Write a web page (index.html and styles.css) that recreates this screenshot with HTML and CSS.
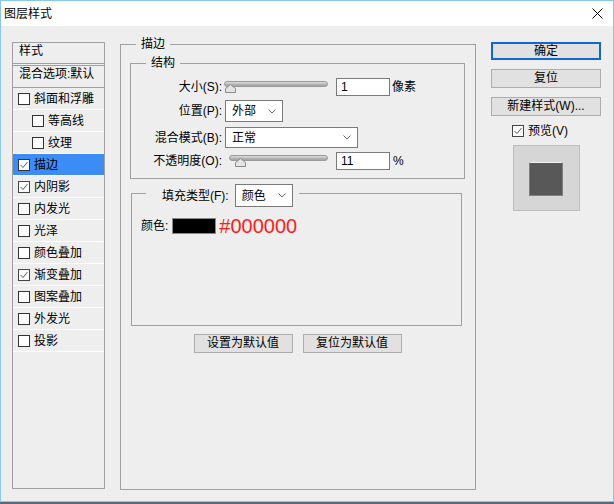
FILE: index.html
```html
<!DOCTYPE html>
<html lang="zh-CN">
<head>
<meta charset="utf-8">
<title>图层样式</title>
<link rel="stylesheet" href="styles.css">
</head>
<body>
<div class="window">
  <div class="titlebar">
    <span class="title">图层样式</span>
    <svg class="close" width="11" height="11" viewBox="0 0 11 11"><path d="M0.5 0.5L10.5 10.5M10.5 0.5L0.5 10.5" stroke="#000" stroke-width="1" fill="none"/></svg>
  </div>
  <div class="body">
    <div class="styles-list">
      <div class="list-head">样式</div>
      <div class="list-blend">混合选项:默认</div>
      <div class="list-item"><span class="cb"></span>斜面和浮雕</div>
      <div class="list-item sub"><span class="cb"></span>等高线</div>
      <div class="list-item sub"><span class="cb"></span>纹理</div>
      <div class="list-item active"><span class="cb"><svg width="10" height="10" viewBox="0 0 10 10"><path d="M1.5 5L4 7.5L8.5 2" stroke="#5a5a5a" stroke-width="1" fill="none"/></svg></span>描边</div>
      <div class="list-item"><span class="cb checked"><svg width="10" height="10" viewBox="0 0 10 10"><path d="M1.5 5L4 7.5L8.5 2" stroke="#5a5a5a" stroke-width="1" fill="none"/></svg></span>内阴影</div>
      <div class="list-item"><span class="cb"></span>内发光</div>
      <div class="list-item"><span class="cb"></span>光泽</div>
      <div class="list-item"><span class="cb"></span>颜色叠加</div>
      <div class="list-item"><span class="cb checked"><svg width="10" height="10" viewBox="0 0 10 10"><path d="M1.5 5L4 7.5L8.5 2" stroke="#5a5a5a" stroke-width="1" fill="none"/></svg></span>渐变叠加</div>
      <div class="list-item"><span class="cb"></span>图案叠加</div>
      <div class="list-item"><span class="cb"></span>外发光</div>
      <div class="list-item"><span class="cb"></span>投影</div>
    </div>

    <fieldset class="group stroke">
      <legend class="lg-stroke">描边</legend>
      <fieldset class="group struct">
        <legend class="lg-struct">结构</legend>
        <div class="row r1">
          <span class="lbl">大小(S):</span>
          <div class="slider s1"><div class="track"></div><svg class="thumb" width="11" height="9" viewBox="0 0 11 9"><path d="M5.5 0.5L10.5 4.5V8.5H0.5V4.5Z" fill="#e4e4e4" stroke="#8a8a8a" stroke-width="1"/></svg></div>
          <div class="num">1</div><span class="unit">像素</span>
        </div>
        <div class="row r2">
          <span class="lbl">位置(P):</span>
          <div class="select s-pos"><span>外部</span><svg width="8" height="5" viewBox="0 0 8 5"><path d="M0.5 0.5L4 4L7.5 0.5" stroke="#6a6a6a" stroke-width="1" fill="none"/></svg></div>
        </div>
        <div class="row r3">
          <span class="lbl">混合模式(B):</span>
          <div class="select s-mode"><span>正常</span><svg width="8" height="5" viewBox="0 0 8 5"><path d="M0.5 0.5L4 4L7.5 0.5" stroke="#6a6a6a" stroke-width="1" fill="none"/></svg></div>
        </div>
        <div class="row r4">
          <span class="lbl">不透明度(O):</span>
          <div class="slider s2"><div class="track"></div><svg class="thumb" width="11" height="9" viewBox="0 0 11 9"><path d="M5.5 0.5L10.5 4.5V8.5H0.5V4.5Z" fill="#e4e4e4" stroke="#8a8a8a" stroke-width="1"/></svg></div>
          <div class="num">11</div><span class="unit pct">%</span>
        </div>
      </fieldset>

      <fieldset class="group fill">
        <legend class="lg-fill">
          <div class="legend-row">
            <span>填充类型(F):</span>
            <div class="select s-fill"><span>颜色</span><svg width="8" height="5" viewBox="0 0 8 5"><path d="M0.5 0.5L4 4L7.5 0.5" stroke="#6a6a6a" stroke-width="1" fill="none"/></svg></div>
          </div>
        </legend>
        <div class="fill-body">
          <div class="color-row">
            <span>颜色:</span><span class="swatch"></span><span class="hex">#000000</span>
          </div>
        </div>
      </fieldset>

      <div class="defaults">
        <button class="btn">设置为默认值</button>
        <button class="btn">复位为默认值</button>
      </div>
    </fieldset>

    <div class="side">
      <button class="btn btn-side btn-ok">确定</button>
      <button class="btn btn-side gap">复位</button>
      <button class="btn btn-side gap">新建样式(W)...</button>
      <div class="preview-row"><span class="cb checked"><svg width="10" height="10" viewBox="0 0 10 10"><path d="M1.5 5L4 7.5L8.5 2" stroke="#5a5a5a" stroke-width="1" fill="none"/></svg></span><span>预览(V)</span></div>
      <div class="preview-box"><div class="preview-sq"></div></div>
    </div>
  </div>
</div>
</body>
</html>
```

FILE: styles.css
```css
html, body {
  margin: 0;
  padding: 0;
}
body {
  width: 614px;
  height: 504px;
  overflow: hidden;
  background: #57697a;
  font-family: "Liberation Sans", "Noto Sans CJK SC", sans-serif;
  font-size: 12px;
  color: #000;
}
.window {
  width: 614px;
  height: 502px;
  box-sizing: border-box;
  border: 1px solid #86c8ef;
  background: #eeeeee;
  display: flex;
  flex-direction: column;
}
.titlebar {
  height: 25px;
  flex: none;
  background: #fff;
  display: flex;
  align-items: center;
  justify-content: space-between;
  padding: 0 10px 0 3px;
}
.title {
  line-height: 14px;
}
.close {
  display: block;
}
.body {
  display: flex;
  align-items: flex-start;
  padding: 10px 0 0 11px;
}

/* left style list */
.styles-list {
  width: 93px;
  height: 447px;
  box-sizing: border-box;
  border: 1px solid #a0a0a0;
  margin: 6px 15px 0 0;
  flex: none;
}
.list-head {
  height: 23px;
  box-sizing: border-box;
  border-bottom: 3px double #a0a0a0;
  padding: 1px 0 0 6px;
  line-height: 15px;
}
.list-blend {
  height: 22px;
  box-sizing: border-box;
  border-bottom: 1px solid #a0a0a0;
  padding: 1px 0 0 6px;
  line-height: 15px;
  white-space: nowrap;
}
.list-item {
  height: 22px;
  box-sizing: border-box;
  border-bottom: 1px solid #fff;
  display: flex;
  align-items: center;
  padding-left: 5px;
  line-height: 14px;
  white-space: nowrap;
}
.list-item.sub {
  padding-left: 19px;
}
.list-item.active {
  background: #3c8cf6;
}
.cb {
  width: 12px;
  height: 12px;
  box-sizing: border-box;
  border: 1px solid #333;
  background: #fff;
  margin-right: 4px;
  flex: none;
  display: flex;
  align-items: center;
  justify-content: center;
}
.cb.checked {
  border-color: #444;
}
.cb svg {
  display: block;
}

/* group boxes */
.group {
  margin: 0;
  border: 1px solid #a0a0a0;
  min-width: 0;
  box-sizing: border-box;
}
.group > legend {
  line-height: 16px;
  white-space: nowrap;
}
.group.stroke {
  width: 356px;
  height: 454px;
  padding: 3px 10px 0 9px;
  flex: none;
}
.lg-stroke {
  padding: 0 5px;
  margin-left: 6px;
}
.group.struct {
  padding: 7px 0 8px 0;
}
.lg-struct {
  padding: 0 5px;
  margin-left: 15px;
}
.row {
  display: flex;
  align-items: center;
}
.r1 { height: 18px; }
.r2 { height: 22px; margin-top: 4px; }
.r3 { height: 21px; margin-top: 5px; }
.r4 { height: 18px; margin-top: 4px; }
.lbl {
  width: 91px;
  margin-right: 2px;
  text-align: right;
  flex: none;
  white-space: nowrap;
  line-height: 14px;
}
.slider {
  position: relative;
  height: 12px;
  margin-right: 8px;
  flex: none;
}
.s1 { width: 104px; }
.s2 { width: 99px; margin-left: 5px; }
.track {
  height: 6px;
  box-sizing: border-box;
  border: 1px solid #9a9a9a;
  border-radius: 3px;
  background: linear-gradient(#dedede, #b4b4b4 60%, #a4a4a4);
}
.thumb {
  position: absolute;
  top: 3px;
  display: block;
}
.s1 .thumb { left: 1px; }
.s2 .thumb { left: 6px; }
.num {
  width: 54px;
  height: 18px;
  box-sizing: border-box;
  border: 1px solid #7a7a7a;
  background: #fff;
  padding-left: 4px;
  line-height: 16px;
  flex: none;
}
.unit {
  margin-left: 2px;
  line-height: 14px;
}
.unit.pct {
  margin-left: 3px;
}
.select {
  height: 100%;
  box-sizing: border-box;
  border: 1px solid #7a7a7a;
  background: #fff;
  display: flex;
  align-items: center;
  justify-content: space-between;
  padding: 0 6px;
  margin-left: 1px;
  flex: none;
  line-height: 14px;
}
.select svg {
  display: block;
}
.s-pos { width: 58px; }
.s-mode { width: 133px; }

/* fill group */
.group.fill {
  margin: 5px 3px 0 1px;
  padding: 0;
}
.lg-fill {
  margin-left: 14px;
  padding: 0 6px 0 16px;
}
.legend-row {
  display: flex;
  align-items: center;
  height: 23px;
  margin-bottom: -5px;
}
.s-fill {
  width: 58px;
  height: 23px;
  margin-left: 6px;
}
.fill-body {
  height: 123px;
  box-sizing: border-box;
  padding: 15px 9px 0;
}
.color-row {
  display: flex;
  align-items: center;
  height: 18px;
  line-height: 14px;
}
.swatch {
  width: 44px;
  height: 16px;
  box-sizing: border-box;
  border: 1px solid #8a8a8a;
  background: #000;
  margin-left: 4px;
  flex: none;
}
.hex {
  font-family: "Liberation Sans", sans-serif;
  font-size: 20px;
  line-height: 18px;
  color: #ff1c1c;
  margin-left: 3px;
}
.defaults {
  display: flex;
  justify-content: center;
  gap: 10px;
  margin-top: 8px;
}

/* buttons */
.btn {
  width: 99px;
  height: 19px;
  box-sizing: border-box;
  border: 1px solid #adadad;
  background: #e1e1e1;
  font: inherit;
  color: #000;
  padding: 0;
  margin: 0;
  line-height: 17px;
  text-align: center;
  white-space: nowrap;
}

/* right column */
.side {
  width: 110px;
  margin: 6px 0 0 15px;
  display: flex;
  flex-direction: column;
  flex: none;
}
.btn-side {
  width: 110px;
}
.btn-ok {
  height: 18px;
  border: 2px solid #1166d6;
  line-height: 14px;
}
.btn.gap {
  margin-top: 9px;
}
.preview-row {
  display: flex;
  align-items: center;
  height: 14px;
  margin: 8px 0 0 21px;
  line-height: 14px;
}
.preview-box {
  width: 67px;
  height: 66px;
  box-sizing: border-box;
  border: 1px solid #bdbdbd;
  background: #d6d6d6;
  margin: 7px 0 0 22px;
  padding: 16px 0 0 15px;
}
.preview-sq {
  width: 34px;
  height: 34px;
  box-sizing: border-box;
  background: #585858;
  border: 1px solid #808080;
  border-top-color: #f2f2f2;
}
```
